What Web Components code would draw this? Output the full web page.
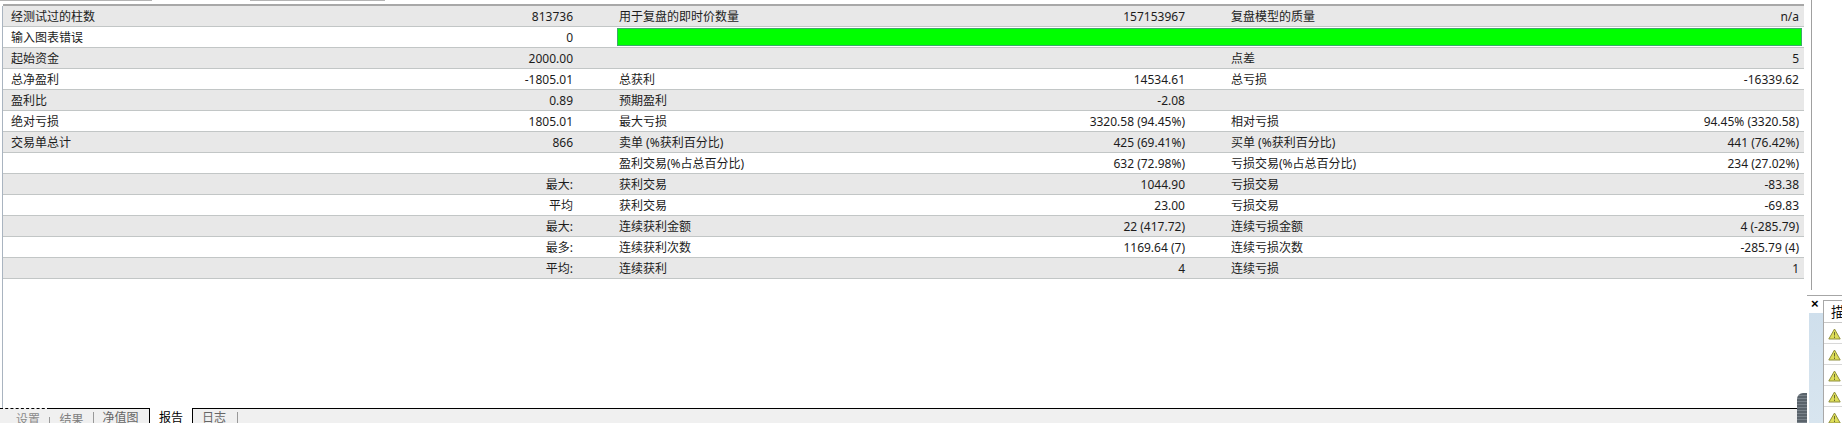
<!DOCTYPE html>
<html>
<head>
<meta charset="utf-8">
<style>
html, body { margin: 0; padding: 0; background: #fff; }
body { width: 1842px; height: 423px; overflow: hidden; font-family: "Noto Sans", "Noto Sans CJK SC", sans-serif; font-size: 12px; color: #1c1c1c; }
#page { display: grid; grid-template-columns: 1807px 35px; height: 423px; }
#main { display: flex; flex-direction: column; min-width: 0; }
</style>
</head>
<body>
<div id="page">
  <div id="main">
    <top-strip></top-strip>
    <report-table>
      <report-row a="经测试过的柱数" b="813736" c="用于复盘的即时价数量" d="157153967" e="复盘模型的质量" f="n/a"></report-row>
      <report-row a="输入图表错误" b="0" bar></report-row>
      <report-row a="起始资金" b="2000.00" e="点差" f="5"></report-row>
      <report-row a="总净盈利" b="-1805.01" c="总获利" d="14534.61" e="总亏损" f="-16339.62"></report-row>
      <report-row a="盈利比" b="0.89" c="预期盈利" d="-2.08"></report-row>
      <report-row a="绝对亏损" b="1805.01" c="最大亏损" d="3320.58 (94.45%)" e="相对亏损" f="94.45% (3320.58)"></report-row>
      <report-row a="交易单总计" b="866" c="卖单 (%获利百分比)" d="425 (69.41%)" e="买单 (%获利百分比)" f="441 (76.42%)"></report-row>
      <report-row c="盈利交易(%占总百分比)" d="632 (72.98%)" e="亏损交易(%占总百分比)" f="234 (27.02%)"></report-row>
      <report-row b="最大:" c="获利交易" d="1044.90" e="亏损交易" f="-83.38"></report-row>
      <report-row b="平均" c="获利交易" d="23.00" e="亏损交易" f="-69.83"></report-row>
      <report-row b="最大:" c="连续获利金额" d="22 (417.72)" e="连续亏损金额" f="4 (-285.79)"></report-row>
      <report-row b="最多:" c="连续获利次数" d="1169.64 (7)" e="连续亏损次数" f="-285.79 (4)"></report-row>
      <report-row b="平均:" c="连续获利" d="4" e="连续亏损" f="1"></report-row>
    </report-table>
    <tab-bar active="报告" tabs="设置,结果,净值图,报告,日志"></tab-bar>
  </div>
  <side-panel></side-panel>
</div>
<script>
class TopStrip extends HTMLElement {
    constructor() {
        super();
        this.attachShadow({ mode: 'open' });
        this.shadowRoot.innerHTML = `
            <style>
                :host { display: block; height: 6px; }
                .seg { display: flex; height: 4px; }
                .seg i { display: block; height: 1px; background: #b4b4b4; }
                .line { height: 2px; margin-left: 3px; width: 1801px; background: #a8a8a8; }
            </style>
            <div class="seg"><i style="width:152px"></i><i style="width:98px;background:#fff"></i><i style="width:135px"></i></div>
            <div class="line"></div>
        `;
    }
}
customElements.define('top-strip', TopStrip);

class ReportTable extends HTMLElement {
    constructor() {
        super();
        this.attachShadow({ mode: 'open' });
        this.shadowRoot.innerHTML = `
            <style>
                :host { display: block; flex: 1; margin-left: 2px; border-left: 1px solid #a9b4c0; }
                .rows { width: 1801px; }
            </style>
            <div class="rows"><slot></slot></div>
        `;
    }
}
customElements.define('report-table', ReportTable);

class ReportRow extends HTMLElement {
    constructor() {
        super();
        this.attachShadow({ mode: 'open' });
    }

    cell(label, value) {
        return `<div class="cell"><span>${label || ''}</span><span>${value || ''}</span></div>`;
    }

    connectedCallback() {
        const get = (n) => this.getAttribute(n);
        const rest = this.hasAttribute('bar')
            ? '<div class="bar"></div>'
            : this.cell(get('c'), get('d')) + this.cell(get('e'), get('f'));
        this.shadowRoot.innerHTML = `
            <style>
                :host { display: grid; grid-template-columns: 562px 566px 568px; column-gap: 46px; height: 21px; box-sizing: border-box; padding: 0 5px 0 8px; border-bottom: 1px solid #c2c6c6; line-height: 22px; }
                :host(:nth-child(odd)) { background: #e8e8e8; }
                :host(:nth-child(even)) { background: #fff; }
                .cell { display: flex; justify-content: space-between; white-space: nowrap; height: 20px; }
                .bar { grid-column: 2 / 4; margin: 1px -3px 0 -2px; height: 18px; box-sizing: border-box; background: #00ff00; border: 1px solid #3da86a; }
            </style>
            ${this.cell(get('a'), get('b'))}${rest}
        `;
    }
}
customElements.define('report-row', ReportRow);

class TabBar extends HTMLElement {
    constructor() {
        super();
        this.attachShadow({ mode: 'open' });
    }

    connectedCallback() {
        const active = this.getAttribute('active');
        const tabs = this.getAttribute('tabs').split(',');
        const html = tabs.map((t) => `<span class="tab${t === active ? ' on' : ''}">${t}</span>`).join('');
        this.shadowRoot.innerHTML = `
            <style>
                :host { display: flex; height: 15px; margin-right: 10px; background: #f0f0f0; line-height: 12px; overflow: hidden; }
                .tab { position: relative; flex: none; box-sizing: border-box; height: 15px; border-top: 1px solid #000; padding-top: 3px; text-align: center; color: #666; }
                .tab::after { content: ''; position: absolute; right: 0; bottom: 0; width: 1px; height: 11px; background: #999; }
                .tab:nth-of-type(1) { width: 50px; padding: 5px 0 0 6px; color: #8a8a8a; border-top: 1px dashed #000; }
                .tab:nth-of-type(1)::after { height: 6px; }
                .tab:nth-of-type(2) { width: 44px; padding: 5px 1px 0 0; color: #808080; }
                .tab:nth-of-type(3) { width: 55px; padding-right: 2px; }
                .tab:nth-of-type(3)::after { display: none; }
                .tab.on { width: 44px; background: #fff; color: #000; border-top: 0; border-left: 1px solid #000; border-right: 1px solid #000; padding-top: 4px; }
                .tab.on::after { display: none; }
                .tab:nth-of-type(5) { width: 45px; padding-right: 3px; }
                .rest { flex: 1; border-top: 1px solid #000; }
            </style>
            ${html}<span class="rest"></span>
        `;
    }
}
customElements.define('tab-bar', TabBar);

class SidePanel extends HTMLElement {
    constructor() {
        super();
        this.attachShadow({ mode: 'open' });
        const tri = `<svg width="13" height="12" viewBox="0 0 13 12"><path d="M6.5 1 L12.2 11 L.8 11 Z" fill="#dede58" stroke="#8f8f3c"/><path d="M6.5 4V7.5M6.5 8.5V10" stroke="#6a6a30"/></svg>`;
        const rows = [0, 1, 2, 3, 4].map(() => `<div class="row">${tri}</div>`).join('');
        this.shadowRoot.innerHTML = `
            <style>
                :host { display: block; position: relative; height: 423px; background: #fff; }
                .edge { height: 290px; width: 5px; box-sizing: border-box; border-right: 1px solid #a0a0a0; }
                .line { height: 1px; background: #a6a6a6; margin-top: 5px; }
                .body { display: flex; height: 127px; overflow: hidden; }
                .strip { flex: none; width: 14px; margin: 17px 0 0 2px; background: linear-gradient(#cfdfec, #d8e5ef); }
                .close { position: absolute; left: 4px; top: 298px; font: bold 13px/12px "Liberation Sans", sans-serif; color: #000; }
                .list { flex: 1; margin-top: 4px; border-left: 1px solid #a8a8a8; border-top: 1px solid #a8a8a8; }
                .head { height: 22px; box-sizing: border-box; line-height: 22px; padding-left: 7px; font-size: 14px; color: #111; border-bottom: 1px solid #c8c8c8; }
                .row { height: 21px; box-sizing: border-box; border-bottom: 1px solid #d8d8d8; padding: 5px 0 0 4px; }
                .row svg { display: block; }
                .handle { position: absolute; left: -10px; top: 393px; width: 10px; height: 30px; border-radius: 6px 0 0 0; background: repeating-linear-gradient(#5a636b 0 2px, #79828a 2px 3px); }
            </style>
            <div class="edge"></div>
            <div class="line"></div>
            <span class="close">×</span>
            <div class="body">
                <div class="strip"></div>
                <div class="list"><div class="head">描</div>${rows}</div>
            </div>
            <div class="handle"></div>
        `;
    }
}
customElements.define('side-panel', SidePanel);
</script>
</body>
</html>
